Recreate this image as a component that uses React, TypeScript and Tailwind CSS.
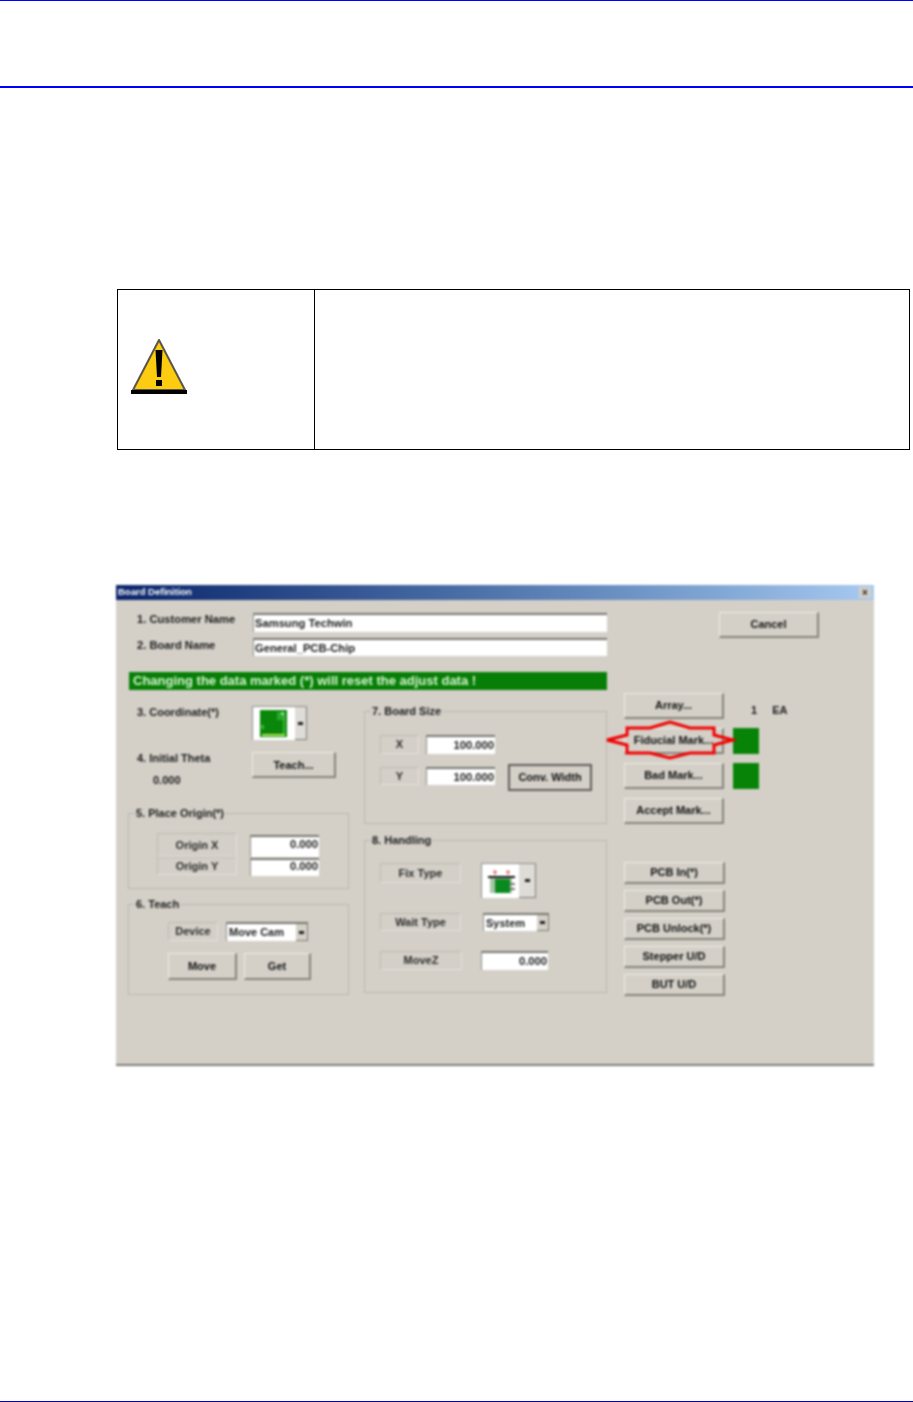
import { FC, ReactNode } from 'react';

const Btn: FC<{ className: string; children: ReactNode }> = ({ className, children }) => (
  <div
    className={`flex items-center justify-center border-t border-l border-t-[#eeece6] border-l-[#eeece6] border-r-2 border-b-2 border-r-[#858379] border-b-[#858379] text-[11px] font-bold whitespace-nowrap text-[#111] ${className}`}
  >
    {children}
  </div>
);

const Field: FC<{ className: string; children?: ReactNode; right?: boolean }> = ({ className, children, right }) => (
  <div
    className={`flex items-center border-t-2 border-l border-t-[#77756f] border-l-[#8f8d87] bg-white px-px text-[11.2px] font-bold text-[#1c1c1c] ${right ? 'justify-end' : ''} ${className}`}
  >
    {children}
  </div>
);

const Tag: FC<{ className: string; children: ReactNode }> = ({ className, children }) => (
  <div
    className={`flex items-center justify-center border-t border-l border-t-[#bdbab2] border-l-[#bdbab2] border-r border-b border-r-[#e4e1db] border-b-[#e4e1db] text-[11px] font-bold text-[#2c2c2c] ${className}`}
  >
    {children}
  </div>
);

const Group: FC<{ title: string; className: string; children: ReactNode }> = ({ title, className, children }) => (
  <div className={`relative border border-[#bab7af] ${className}`}>
    <span className="absolute -top-[7px] left-[6px] bg-[#d4d0c8] px-px text-[11px] leading-[12px] font-bold text-[#1c1c1c]">
      {title}
    </span>
    {children}
  </div>
);

const Arrow: FC = () => <span className="h-[3px] w-[5px] bg-[#222]" />;

const CoordIcon: FC = () => (
  <svg width="27" height="27" viewBox="0 0 27 27">
    <rect width="27" height="27" fill="#0a860a" />
    <rect x="17" y="2" width="8" height="8" fill="#2aa82a" />
    <path d="M2 25H25" stroke="#b4e85c" strokeWidth="2" fill="none" />
    <path d="M24 4V24" stroke="#4cc04c" strokeWidth="1.5" fill="none" />
    <rect x="1" y="15" width="3" height="4" fill="#3fb43f" />
    <rect x="21" y="2" width="3" height="3" fill="#8fdc8f" />
  </svg>
);

const FixIcon: FC = () => (
  <svg width="37" height="28" viewBox="0 0 37 28">
    <rect width="37" height="28" fill="#fff" />
    <path d="M13 4V9M26 4V9M11 6H15M24 6H28" stroke="#dd7a7a" strokeWidth="1.5" />
    <rect x="6" y="10" width="27" height="2" fill="#111" />
    <rect x="8" y="12" width="22" height="15" fill="#a9c4a9" />
    <rect x="13" y="13" width="15" height="14" fill="#0a8a1e" />
    <rect x="28" y="17" width="5" height="2" fill="#777" />
    <rect x="28" y="22" width="5" height="2" fill="#777" />
  </svg>
);

const WarningIcon: FC = () => (
  <svg width="56" height="55" viewBox="0 0 56 55">
    <path d="M28 1L54 51H2Z" fill="#fdcb10" stroke="#5a574a" strokeWidth="2" strokeLinejoin="round" />
    <rect x="0" y="51" width="56" height="4" fill="#000" />
    <path d="M24.5 11H31.5L30 38H26Z" fill="#000" />
    <rect x="25" y="41" width="6" height="6" fill="#000" />
  </svg>
);

const App: FC = () => {
  return (
    <div className="flex h-[1402px] w-[913px] flex-col bg-white font-['Liberation_Sans',Arial,sans-serif]">
      <div className="h-px bg-[#0000ff]" />
      <div className="mt-[85px] h-[2px] bg-[#0000ff]" />

      {/* warning box */}
      <div className="mt-[201px] ml-[117px] flex h-[161px] w-[793px] border border-black">
        <div className="flex w-[197px] items-start border-r border-black pt-[49px] pl-[13px]">
          <WarningIcon />
        </div>
        <div className="flex-1" />
      </div>

      {/* Board Definition dialog */}
      <div className="relative mt-[135px] ml-[116px] w-[758px] blur-[0.8px]">
        <div className="flex h-[15px] items-center justify-between bg-gradient-to-r from-[#0a246a] to-[#a6caf0] pr-[3px] pl-[2px]">
          <span className="text-[9.5px] font-bold text-white">Board Definition</span>
          <span className="flex h-[11px] w-[12px] items-center justify-center bg-[#d4d0c8] text-[10px] leading-none font-bold text-[#222]">
            ×
          </span>
        </div>

        <div className="flex h-[466px] border-b-2 border-b-[#7f7d78] bg-[#d4d0c8] pl-[12px]">
          {/* left and middle */}
          <div className="w-[479px] pt-[13px]">
            <div className="flex items-center pl-[9px] text-[11.2px] font-bold text-[#1c1c1c]">
              <span className="w-[116px] -translate-y-[3px]">1. Customer Name</span>
              <Field className="h-[19px] w-[354px]">Samsung Techwin</Field>
            </div>
            <div className="mt-[6px] flex items-center pl-[9px] text-[11.2px] font-bold text-[#1c1c1c]">
              <span className="w-[116px] -translate-y-[2px]">2. Board Name</span>
              <Field className="h-[18px] w-[354px]">General_PCB-Chip</Field>
            </div>
            <div className="mt-[16px] ml-px flex h-[18px] items-center bg-[#077f07] pl-[4px] text-[13px] font-bold whitespace-nowrap text-[#d8f4d0]">
              Changing the data marked (*) will reset the adjust data !
            </div>

            <div className="flex gap-[15px]">
              <div className="w-[221px] pt-[16px]">
                <div className="flex items-start pl-[9px] text-[11px] leading-[12px] font-bold text-[#1c1c1c]">
                  <span className="w-[115px]">3. Coordinate(*)</span>
                  <div className="flex h-[34px] w-[55px] border-t border-l border-t-[#8f8d87] border-l-[#8f8d87] bg-white pt-[3px] pl-[7px]">
                    <CoordIcon />
                    <div className="-mt-[3px] ml-[8px] flex flex-1 items-center justify-center border-r border-b border-r-[#7d7b76] border-b-[#7d7b76] bg-[#dedcd6]">
                      <Arrow />
                    </div>
                  </div>
                </div>
                <div className="mt-[12px] flex items-start pl-[9px] text-[11px] leading-[12px] font-bold text-[#1c1c1c]">
                  <div className="w-[115px]">
                    <div>4. Initial Theta</div>
                    <div className="mt-[10px] pl-[16px]">0.000</div>
                  </div>
                  <Btn className="h-[26px] w-[84px]">Teach...</Btn>
                </div>

                <Group title="5. Place Origin(*)" className="mt-[27px] h-[76px] pt-[19px] pl-[28px]">
                  <div className="flex items-end">
                    <Tag className="h-[24px] w-[80px]">Origin X</Tag>
                    <Field right className="ml-[13px] h-[22px] w-[69px] pb-[5px]">0.000</Field>
                  </div>
                  <div className="flex items-start">
                    <Tag className="h-[18px] w-[80px]">Origin Y</Tag>
                    <Field right className="ml-[13px] mt-px h-[18px] w-[69px] pb-[3px]">0.000</Field>
                  </div>
                </Group>

                <Group title="6. Teach" className="mt-[15px] h-[91px] pt-[17px] pl-[39px]">
                  <div className="flex">
                    <Tag className="h-[19px] w-[50px]">Device</Tag>
                    <div className="ml-[8px] flex h-[19px] w-[82px] border-t-2 border-l border-t-[#77756f] border-l-[#8f8d87] bg-white pl-[2px] text-[11px] font-bold text-[#1c1c1c]">
                      <span className="flex-1 self-center whitespace-nowrap">Move Cam</span>
                      <div className="flex w-[12px] items-center justify-center border-r border-b border-r-[#7d7b76] border-b-[#7d7b76] bg-[#d4d0c8]">
                        <Arrow />
                      </div>
                    </div>
                  </div>
                  <div className="mt-[12px] flex gap-[7px]">
                    <Btn className="h-[27px] w-[69px]">Move</Btn>
                    <Btn className="h-[27px] w-[67px]">Get</Btn>
                  </div>
                </Group>
              </div>

              <div className="w-[243px] pt-[21px]">
                <Group title="7. Board Size" className="h-[113px] pt-[23px] pl-[15px]">
                  <div className="flex">
                    <Tag className="h-[19px] w-[39px]">X</Tag>
                    <Field right className="ml-[7px] h-[19px] w-[69px]">100.000</Field>
                  </div>
                  <div className="mt-[13px] flex items-start">
                    <Tag className="h-[18px] w-[39px]">Y</Tag>
                    <Field right className="ml-[7px] h-[18px] w-[69px]">100.000</Field>
                    <div className="-mt-[3px] ml-[13px] flex h-[27px] w-[84px] items-center justify-center border-2 border-[#5f5d59] text-[11px] font-bold whitespace-nowrap text-[#111]">
                      Conv. Width
                    </div>
                  </div>
                </Group>

                <Group title="8. Handling" className="mt-[16px] h-[153px] pt-[22px] pl-[15px]">
                  <div className="flex items-start">
                    <Tag className="h-[20px] w-[81px]">Fix Type</Tag>
                    <div className="ml-[20px] flex h-[35px] w-[55px] border-t border-l border-t-[#8f8d87] border-l-[#8f8d87] bg-white pt-[2px]">
                      <FixIcon />
                      <div className="-mt-[2px] flex flex-1 items-center justify-center border-r border-b border-r-[#7d7b76] border-b-[#7d7b76] bg-[#dedcd6]">
                        <Arrow />
                      </div>
                    </div>
                  </div>
                  <div className="mt-[15px] flex">
                    <Tag className="h-[18px] w-[81px]">Wait Type</Tag>
                    <div className="ml-[22px] flex h-[18px] w-[66px] border-t-2 border-l border-t-[#77756f] border-l-[#8f8d87] bg-white pl-[2px] text-[11px] font-bold text-[#1c1c1c]">
                      <span className="flex-1 self-center">System</span>
                      <div className="flex w-[12px] items-center justify-center border-r border-b border-r-[#7d7b76] border-b-[#7d7b76] bg-[#d4d0c8]">
                        <Arrow />
                      </div>
                    </div>
                  </div>
                  <div className="mt-[20px] flex">
                    <Tag className="h-[19px] w-[82px]">MoveZ</Tag>
                    <Field right className="ml-[19px] h-[19px] w-[67px]">0.000</Field>
                  </div>
                </Group>
              </div>
            </div>
          </div>

          {/* right button column */}
          <div className="ml-[17px] flex flex-col pt-[12px]">
            <Btn className="ml-[95px] h-[26px] w-[100px]">Cancel</Btn>
            <div className="mt-[55px] flex items-center">
              <Btn className="h-[26px] w-[100px]">Array...</Btn>
              <span className="mt-[8px] ml-[27px] text-[11px] font-bold text-[#1c1c1c]">1</span>
              <span className="mt-[8px] ml-[15px] text-[11px] font-bold text-[#1c1c1c]">EA</span>
            </div>
            <div className="mt-[9px] flex items-center gap-[9px]">
              <Btn className="h-[26px] w-[100px]">Fiducial Mark...</Btn>
              <div className="h-[26px] w-[26px] bg-[#078407]" />
            </div>
            <div className="mt-[9px] flex items-center gap-[9px]">
              <Btn className="h-[26px] w-[100px]">Bad Mark...</Btn>
              <div className="h-[26px] w-[26px] bg-[#078407]" />
            </div>
            <Btn className="mt-[9px] h-[26px] w-[100px]">Accept Mark...</Btn>
            <div className="mt-[38px] flex flex-col gap-[6px]">
              <Btn className="h-[22px] w-[101px]">PCB In(*)</Btn>
              <Btn className="h-[22px] w-[101px]">PCB Out(*)</Btn>
              <Btn className="h-[22px] w-[101px]">PCB Unlock(*)</Btn>
              <Btn className="h-[22px] w-[101px]">Stepper U/D</Btn>
              <Btn className="h-[22px] w-[101px]">BUT U/D</Btn>
            </div>
          </div>
        </div>

        {/* red callout around Fiducial Mark */}
        <svg className="absolute top-[134px] left-[489px]" width="132" height="42" viewBox="0 0 132 42">
          <path
            d="M2 21L22 16V9H45L65 3L85 9H109V16L128 21L109 26V34H85L65 39L45 34H22V26Z"
            fill="none"
            stroke="#f00000"
            strokeWidth="3"
          />
        </svg>
      </div>

      <div className="mt-auto h-px bg-[#0000c0]" />
    </div>
  );
};

export default App;
